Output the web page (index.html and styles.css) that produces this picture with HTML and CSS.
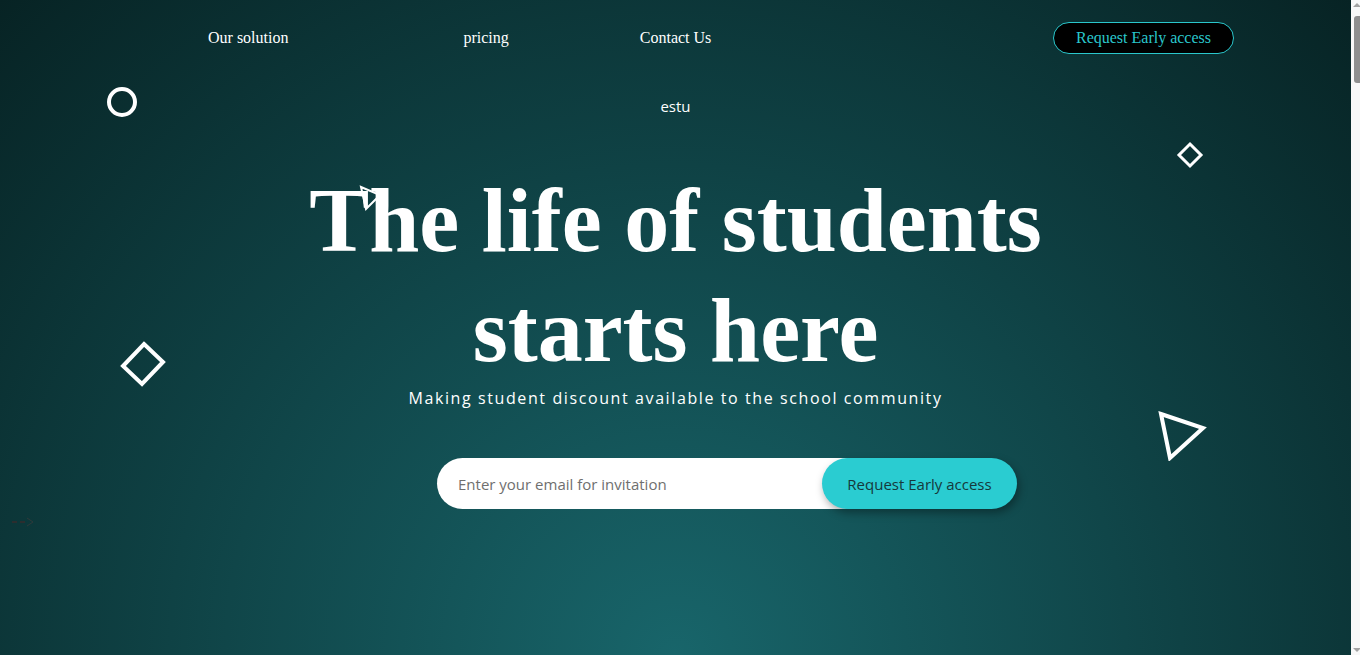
FILE: index.html
```html
<!DOCTYPE html>
<html lang="en">
<head>
<meta charset="utf-8">
<title>estu</title>
<link rel="stylesheet" href="styles.css">
</head>
<body>
<div class="page">
  <section class="hero">
    <nav class="nav">
      <a class="nav-link link-solution" href="#">Our solution</a>
      <a class="nav-link link-pricing" href="#">pricing</a>
      <a class="nav-link" href="#">Contact Us</a>
      <a class="nav-cta" href="#">Request Early access</a>
    </nav>

    <div class="brand">estu</div>

    <h1 class="title">The life of students<br>starts here</h1>
    <p class="subtitle">Making student discount available to the school community</p>

    <form class="signup" onsubmit="return false;">
      <input class="signup-input" type="email" placeholder="Enter your email for invitation">
      <button class="signup-btn" type="submit">Request Early access</button>
    </form>

    <svg class="shape shape-circle" width="34" height="34" viewBox="0 0 34 34"><circle cx="17" cy="17" r="13" fill="none" stroke="#fff" stroke-width="4"/></svg>
    <svg class="shape shape-diamond-sm" width="28" height="28" viewBox="0 0 28 28"><path d="M14 3 L25 14 L14 25 L3 14 Z" fill="none" stroke="#fff" stroke-width="3"/></svg>
    <svg class="shape shape-diamond-lg" width="46" height="46" viewBox="0 0 46 46"><path d="M24 3 L43 21 L22 43 L3 25 Z" fill="none" stroke="#fff" stroke-width="4"/></svg>
    <svg class="shape shape-tri-lg" width="52" height="52" viewBox="0 0 52 52"><path d="M4 5 L46 19 L13 49 Z" fill="none" stroke="#fff" stroke-width="4"/></svg>
    <svg class="shape shape-tri-sm" width="26" height="28" viewBox="0 0 26 28"><path d="M2 2 L21 10 L7 24 Z" fill="none" stroke="#fff" stroke-width="2"/></svg>
    <svg class="shape shape-arrow" width="26" height="12" viewBox="0 0 26 12"><path d="M1 6 H6 M9 6 H14" stroke="#4a2626" stroke-width="1"/><path d="M16 2 L22 6 L16 10" fill="none" stroke="#2e3a3a" stroke-width="1"/></svg>
  </section>

  <aside class="scrollbar" aria-hidden="true">
    <span class="sb-arrow sb-up"></span>
    <span class="sb-track"><span class="sb-thumb"></span></span>
    <span class="sb-arrow sb-down"></span>
  </aside>
</div>
</body>
</html>
```

FILE: styles.css
```css
* { box-sizing: border-box; }

html, body {
  margin: 0;
  padding: 0;
  height: 100%;
  overflow: hidden;
}

body {
  background: #072324;
  font-family: "Liberation Serif", "Times New Roman", serif;
}

.page {
  display: flex;
  height: 100vh;
}

.hero {
  position: relative;
  flex: 1;
  height: 100%;
  background: radial-gradient(ellipse at bottom, #18656a 0%, #072324 100%);
  color: #fff;
  overflow: hidden;
}

.nav {
  display: flex;
  align-items: center;
  height: 76px;
  padding: 0 117px 0 208px;
  font-family: "Liberation Serif", "Times New Roman", serif;
  font-size: 16px;
}

.nav-link {
  color: #fff;
  text-decoration: none;
}

.link-solution { margin-right: 175px; }
.link-pricing { margin-right: 131px; }

.nav-cta {
  margin-left: auto;
  display: inline-flex;
  align-items: center;
  justify-content: center;
  width: 181px;
  height: 32px;
  background: #000;
  color: #2ac7cc;
  border: 1px solid #2ac7cc;
  border-radius: 16px;
  text-decoration: none;
  font-size: 16px;
}

.brand {
  text-align: center;
  font-family: "Open Sans", "Noto Sans", sans-serif;
  font-size: 15px;
  margin-top: 19px;
  line-height: 22px;
}

.title {
  margin: 49px 0 0;
  text-align: center;
  font-family: "Liberation Serif", "Times New Roman", serif;
  font-weight: bold;
  font-size: 90px;
  line-height: 110px;
  color: #fff;
}

.subtitle {
  margin: 1px 0 0;
  text-align: center;
  font-family: "Open Sans", "Noto Sans", sans-serif;
  font-size: 16px;
  letter-spacing: 1.6px;
  line-height: 22px;
  color: #fff;
}

.signup {
  display: flex;
  justify-content: center;
  margin-top: 49px;
  padding-left: 103px;
}

.signup-input {
  width: 433px;
  height: 51px;
  border: none;
  outline: none;
  border-radius: 26px;
  padding: 0 0 0 21px;
  background: #fff;
  font-family: "Open Sans", "Noto Sans", sans-serif;
  font-size: 15px;
  color: #333;
}

.signup-input::placeholder {
  color: #6f6f6f;
}

.signup-btn {
  position: relative;
  width: 195px;
  height: 51px;
  margin-left: -48px;
  border: none;
  border-radius: 26px;
  background: #2accd1;
  color: #16393b;
  font-family: "Open Sans", "Noto Sans", sans-serif;
  font-size: 15px;
  box-shadow: 2px 4px 8px rgba(0, 0, 0, 0.35);
  cursor: pointer;
}

.shape {
  position: absolute;
  display: block;
}

.shape-circle { left: 105px; top: 85px; }
.shape-diamond-sm { left: 1176px; top: 141px; }
.shape-diamond-lg { left: 120px; top: 341px; }
.shape-tri-lg { left: 1157px; top: 409px; }
.shape-tri-sm { left: 359px; top: 185px; }
.shape-arrow { left: 11px; top: 516px; }

/* imitation of the browser scrollbar */
.scrollbar {
  width: 9px;
  height: 100%;
  display: flex;
  flex-direction: column;
  align-items: center;
  background: #f8f8f8;
}

.sb-arrow {
  width: 0;
  height: 0;
  border-left: 4px solid transparent;
  border-right: 4px solid transparent;
  margin-left: 3px;
}

.sb-up {
  margin-top: 3px;
  border-bottom: 4px solid #a3a3a3;
}

.sb-down {
  margin-bottom: 3px;
  border-top: 4px solid #a3a3a3;
}

.sb-track {
  flex: 1;
  width: 100%;
  display: flex;
  justify-content: flex-end;
  padding-top: 9px;
}

.sb-thumb {
  width: 6px;
  height: 67px;
  background: #8f8f8f;
  border-radius: 3px 0 0 3px;
}
```
